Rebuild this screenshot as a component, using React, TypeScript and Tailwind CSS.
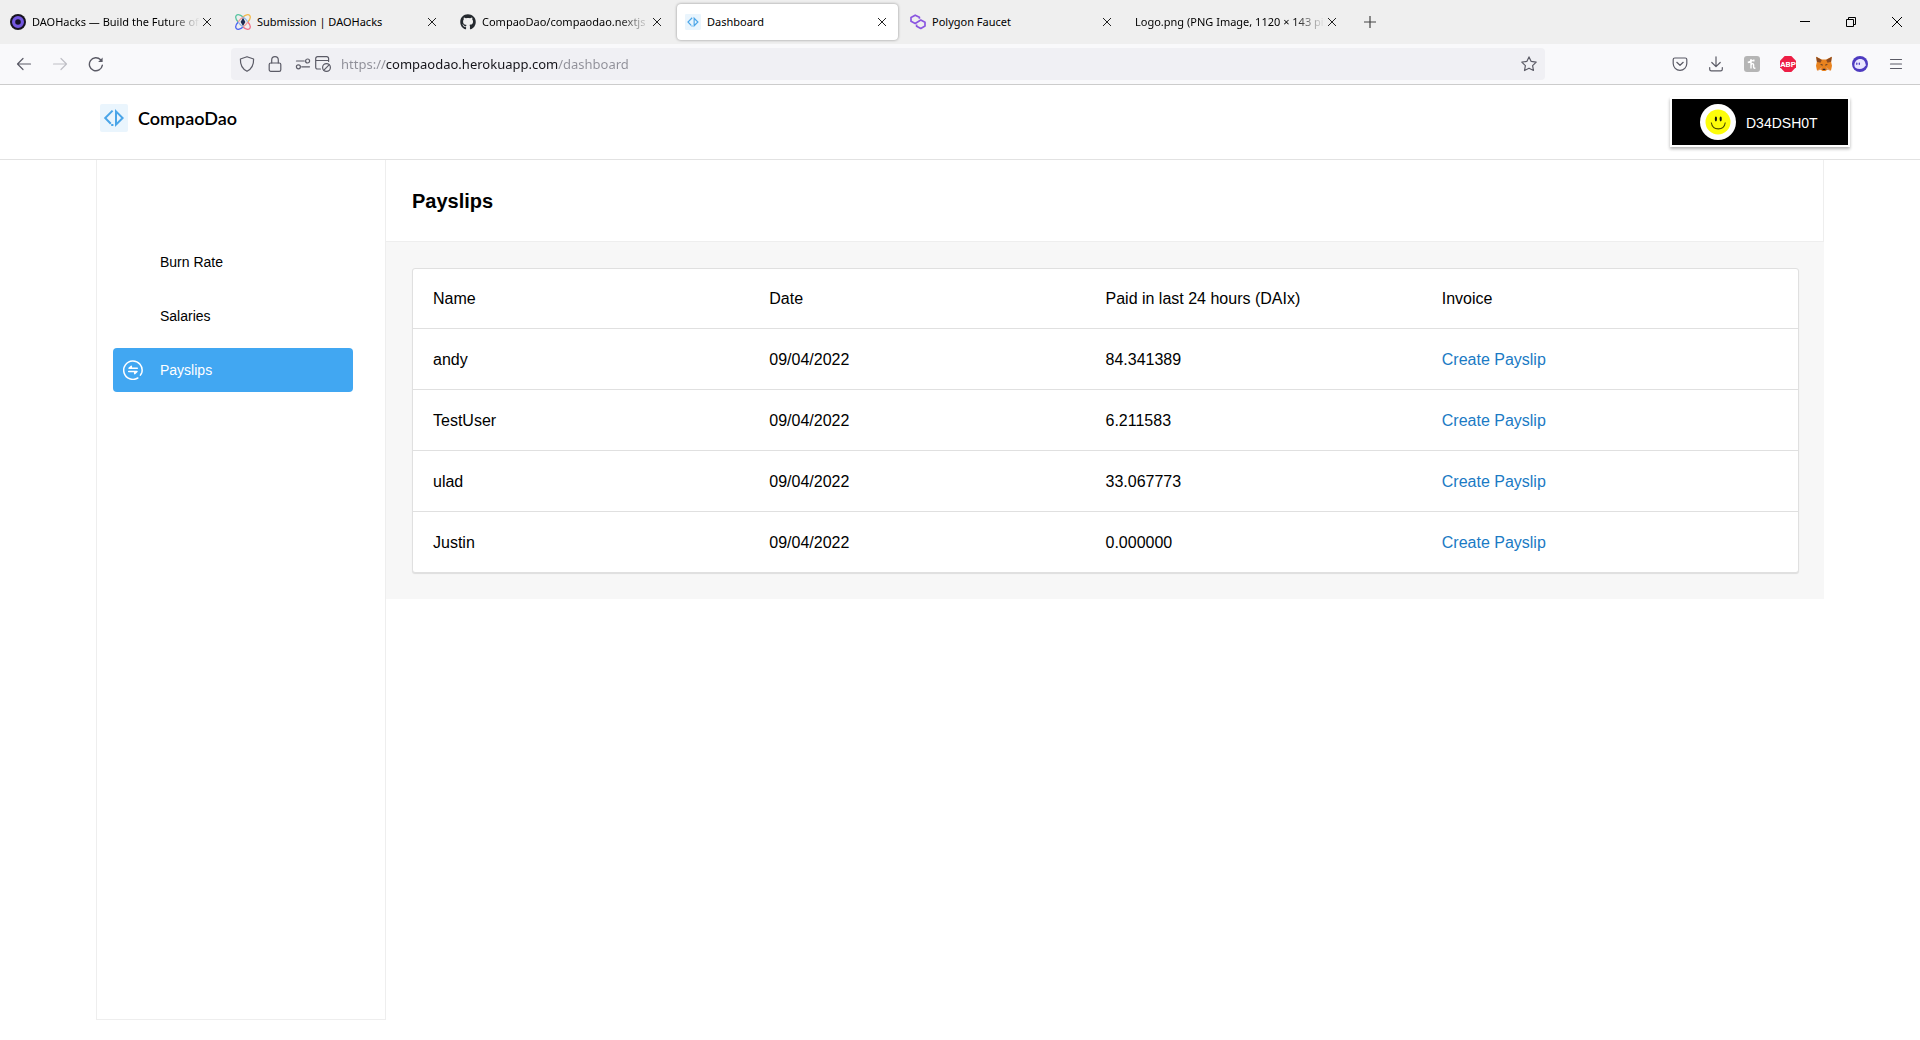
import { useState } from "react";
import type { ReactNode } from "react";
import { FaGithub } from "react-icons/fa";

type Tab = { id: number; title: string; icon?: ReactNode; faded?: boolean };

const PAYSLIPS = [
  { name: "andy", date: "09/04/2022", paid: 84.341389 },
  { name: "TestUser", date: "09/04/2022", paid: 6.211583 },
  { name: "ulad", date: "09/04/2022", paid: 33.067773 },
  { name: "Justin", date: "09/04/2022", paid: 0 },
];

const HEADERS = ["Name", "Date", "Paid in last 24 hours (DAIx)", "Invoice"];

function CompaoMark({ className }: { className?: string }) {
  return (
    <svg viewBox="0 0 28 28" className={className} aria-hidden="true">
      <rect width="28" height="28" rx="2" fill="#eaf5fd" />
      <g fill="none" stroke="#4aa5e8" strokeWidth="2">
        <path d="M12.6 6.6 5.2 14l5.6 5.8" />
        <path d="M16 7.4v13.2L22.6 14z" />
        <path d="M11.2 21h2.2" />
      </g>
    </svg>
  );
}

function DaoHacksIcon() {
  return (
    <svg viewBox="0 0 16 16" className="size-4" aria-hidden="true">
      <circle cx="8" cy="8" r="8" fill="#17131f" />
      <circle cx="8" cy="8" r="4.4" fill="none" stroke="#7357e0" strokeWidth="3.2" />
      <circle cx="8" cy="8" r="2" fill="#120d2b" />
    </svg>
  );
}

function SubmissionIcon() {
  return (
    <svg viewBox="0 0 16 16" className="size-4" fill="none" strokeWidth="1.3" aria-hidden="true">
      <path d="M8 3C10.5.8 13.4 0 14.6 1.400s.4 4.200-1.800 6.600" stroke="#f2b94b" />
      <path d="M8 3C5.500.8 2.600 0 1.400 1.400s-.4 4.200 1.800 6.600" stroke="#58c3a0" />
      <path d="M8 13c2.500 2.200 5.400 3 6.600 1.600s.4-4.200-1.800-6.600" stroke="#f0708a" />
      <path d="M8 13c-2.500 2.200-5.400 3-6.600 1.600S1 10.400 3.200 8" stroke="#4b63f0" />
      <path d="M8 3c2 1.400 3.700 3.200 4.800 5M8 13c-2-1.400-3.700-3.200-4.800-5" stroke="#8ab4e8" />
      <path d="M8 3C6 4.400 4.300 6.200 3.200 8M8 13c2-1.400 3.700-3.200 4.800-5" stroke="#f09a9a" />
      <path d="M8 3.800 10.400 8 8 12 5.600 8z" fill="#1d2b52" />
    </svg>
  );
}

function PolygonIcon() {
  return (
    <svg viewBox="0 0 16 16" className="size-4" fill="none" stroke="#8a55e0" strokeWidth="1.7" strokeLinejoin="round" aria-hidden="true">
      <path d="M9.400 4.800V3.300L5.200 1.200 1 3.400v3.800l4.200 2.200 5.600-3.300L15 8.300v3.800l-4.200 2.300-4.200-2.200v-1.700" />
    </svg>
  );
}

function CloseIcon({ className }: { className?: string }) {
  return (
    <svg viewBox="0 0 10 10" className={className} fill="none" stroke="currentColor" strokeWidth="1" aria-hidden="true">
      <path d="m1 1 8 8M9 1 1 9" />
    </svg>
  );
}

// shared frame of the 16px toolbar glyphs
function Glyph({ children }: { children: ReactNode }) {
  return (
    <svg
      viewBox="0 0 16 16"
      className="size-4 shrink-0"
      fill="none"
      stroke="currentColor"
      strokeWidth="1.2"
      strokeLinecap="round"
      strokeLinejoin="round"
      aria-hidden="true"
    >
      {children}
    </svg>
  );
}

function ToolButton({ label, children, disabled }: { label: string; children: ReactNode; disabled?: boolean }) {
  return (
    <button
      aria-label={label}
      disabled={disabled}
      className="flex h-8 w-9 items-center justify-center text-[#5b5b66] disabled:text-[#c0c0c6]"
    >
      {children}
    </button>
  );
}

const TABS: Tab[] = [
  { id: 1, title: "DAOHacks — Build the Future of", icon: <DaoHacksIcon />, faded: true },
  { id: 2, title: "Submission | DAOHacks", icon: <SubmissionIcon /> },
  { id: 3, title: "CompaoDao/compaodao.nextjs", icon: <FaGithub className="size-4 text-[#24292e]" />, faded: true },
  { id: 4, title: "Dashboard", icon: <CompaoMark className="size-4" /> },
  { id: 5, title: "Polygon Faucet", icon: <PolygonIcon /> },
  { id: 6, title: "Logo.png (PNG Image, 1120 × 143 pixels)", faded: true },
];

function TabStrip() {
  const [active, setActive] = useState(4);

  return (
    <div className="flex h-11 bg-[#efefef]">
      <div className="flex" role="tablist">
        {TABS.map((t) => (
          <div
            key={t.id}
            className={`mx-0.5 my-1 flex w-[221px] items-center rounded pr-[11px] pl-2 ${
              t.id === active ? "bg-white shadow-[0_0_3px_rgba(0,0,0,0.4)]" : ""
            }`}
          >
            <button
              role="tab"
              aria-selected={t.id === active}
              onClick={() => setActive(t.id)}
              className="flex min-w-0 flex-1 items-center gap-1.5 text-left"
            >
              {t.icon && <span className="shrink-0">{t.icon}</span>}
              <span
                className={`min-w-0 flex-1 pt-px whitespace-nowrap ${
                  t.faded ? "overflow-hidden [mask-image:linear-gradient(to_left,transparent,black_32px)]" : ""
                }`}
              >
                {t.title}
              </span>
            </button>
            <button aria-label={`Close ${t.title}`} className="ml-0.5 shrink-0 text-[#222]">
              <CloseIcon className="size-2.5" />
            </button>
          </div>
        ))}
      </div>
      <button aria-label="New tab" className="flex w-10 items-center justify-center text-[#444]">
        <svg viewBox="0 0 12 12" className="size-3" fill="none" stroke="currentColor" strokeWidth="1.2">
          <path d="M6 0v12M0 6h12" />
        </svg>
      </button>
      <div className="ml-auto flex text-black">
        <button aria-label="Minimize" className="flex w-[46px] items-center justify-center">
          <svg viewBox="0 0 10 10" className="size-2.5" stroke="currentColor">
            <path d="M0 4.500h10" />
          </svg>
        </button>
        <button aria-label="Restore" className="flex w-[46px] items-center justify-center">
          <svg viewBox="0 0 10 10" className="size-2.5" fill="none" stroke="currentColor">
            <path d="M.5 2.500h7v7h-7zM2.500 2.500v-2h7v7h-2" />
          </svg>
        </button>
        <button aria-label="Close window" className="flex w-[46px] items-center justify-center">
          <svg viewBox="0 0 10 10" className="size-2.5" fill="none" stroke="currentColor">
            <path d="m0 0 10 10M10 0 0 10" />
          </svg>
        </button>
      </div>
    </div>
  );
}

function Toolbar() {
  return (
    <div className="flex h-[41px] items-center border-b border-[#cccccc] bg-[#f9f9fb] px-1.5">
      <ToolButton label="Back">
        <Glyph>
          <path d="M14.500 8h-13M7 2.500 1.500 8 7 13.500" />
        </Glyph>
      </ToolButton>
      <ToolButton label="Forward" disabled>
        <Glyph>
          <path d="M1.500 8h13M9 2.500 14.500 8 9 13.500" />
        </Glyph>
      </ToolButton>
      <ToolButton label="Reload">
        <Glyph>
          <path d="M14.300 9.300A6.500 6.500 0 1 1 12.600 3.800" strokeWidth="1.4" />
          <path d="M14.600 1.600v4.500h-4.500z" fill="currentColor" stroke="none" />
        </Glyph>
      </ToolButton>

      <div className="mx-[117px] flex h-8 flex-1 items-center rounded bg-[#f0f0f4] px-2 text-[#5b5b66]">
        <Glyph>
          <path d="M8 .7 14.600 3c.2 5.200-1.600 9.800-6.600 12.300C3 12.800 1.200 8.200 1.400 3z" />
        </Glyph>
        <span className="ml-3">
          <Glyph>
            <rect x="2.200" y="7" width="11.600" height="8.300" rx="1.600" />
            <path d="M4.700 7V3.900a3.300 3.300 0 0 1 6.600 0V7" />
          </Glyph>
        </span>
        <span className="ml-3">
          <Glyph>
            <circle cx="12.600" cy="5" r="2" />
            <path d="M1.500 5h7.800" />
            <circle cx="3.400" cy="10.800" r="2" />
            <path d="M6.700 10.800h7.800" />
          </Glyph>
        </span>
        <span className="ml-1">
          <Glyph>
            <path d="M5.500 13H2.500A1.800 1.800 0 0 1 .7 11.200V2.500A1.800 1.800 0 0 1 2.500.7h9.300a1.800 1.800 0 0 1 1.800 1.800v3M.7 4.500h12.900" />
            <circle cx="11.500" cy="11.500" r="3.900" />
            <path d="m8.900 14.100 5.200-5.200" />
          </Glyph>
        </span>
        <input
          aria-label="Address"
          defaultValue="https://compaodao.herokuapp.com/dashboard"
          className="ml-2.5 min-w-0 flex-1 bg-[linear-gradient(to_right,#8f8f98_45px,#15141a_45px,#15141a_217px,#8f8f98_217px)] bg-clip-text pt-0.5 text-[13px] text-transparent outline-none"
        />
        <button aria-label="Bookmark this page">
          <Glyph>
            <path d="m8 .9 2.200 4.500 5 .7-3.600 3.500.9 4.900L8 12.200l-4.500 2.300.9-4.900L.8 6.100l5-.7z" />
          </Glyph>
        </button>
      </div>

      <ToolButton label="Save to Pocket">
        <Glyph>
          <path d="M2.800 2h10.400a1.600 1.600 0 0 1 1.600 1.600V7.500a6.800 6.800 0 0 1-13.600 0V3.600A1.600 1.600 0 0 1 2.800 2z" />
          <path d="M4.800 6.300 8 9.300l3.200-3" />
        </Glyph>
      </ToolButton>
      <ToolButton label="Downloads">
        <Glyph>
          <path d="M8 .8v9.700M3.800 6.500 8 10.700l4.200-4.200M1.700 11.500v1.700c0 1 .6 1.600 1.600 1.600h9.400c1 0 1.600-.6 1.600-1.600v-1.700" />
        </Glyph>
      </ToolButton>
      <ToolButton label="Honey">
        <svg viewBox="0 0 16 16" className="size-4">
          <rect width="16" height="16" rx="3" fill="#b5b5b5" />
          <path d="M3.800 6.500 9 4.300M7 3v9.500M7 9.200c.7-1.900 2.600-2.100 2.600-.2v2c0 1.200.8 1.500 1.800.8M9.800 3.600v2" fill="none" stroke="#fff" strokeWidth="1.400" />
        </svg>
      </ToolButton>
      <ToolButton label="Adblock Plus">
        <svg viewBox="0 0 16 16" className="size-4">
          <path d="M4.700 0h6.600L16 4.700v6.600L11.300 16H4.700L0 11.300V4.700z" fill="#ed1e45" />
          <text x="8" y="10.800" textAnchor="middle" fill="#fff" fontSize="8" fontWeight="700" fontFamily="Roboto, sans-serif">
            ABP
          </text>
        </svg>
      </ToolButton>
      <ToolButton label="MetaMask">
        <svg viewBox="0 0 16 16" className="size-4">
          <path d="m.2.8 5.600 2.800h4.400L15.800.8l-.7 5 .9 4-1 4.700-3.800-.8L9.500 15h-3l-1.700-1.300-3.800.8L0 9.800l.9-4z" fill="#e8821e" />
          <path d="M.2.800 5.800 4 4.500 6.800.9 5.800zM15.800.8 10.200 4l1.300 2.800 3.600-1z" fill="#8b4a20" />
          <path d="m1 14.500 3.800-.8L6 11zM15 14.500l-3.800-.8L10 11z" fill="#e0a070" />
          <path d="m4 8.300 2.600.3-.2 1.200zM12 8.300l-2.600.3.2 1.200zM6.800 12.700h2.400l.3 1.300h-3z" fill="#2c2530" />
        </svg>
      </ToolButton>
      <ToolButton label="Phantom">
        <svg viewBox="0 0 16 16" className="size-4">
          <circle cx="8" cy="8" r="8" fill="#4e3bc0" />
          <path d="M2.400 9.500C2.400 5.600 5 3 8.200 3c3.200 0 5.100 2.200 5.400 5.400.5.300.6 1.300-.3 1.400-.8 2-2.800 3.200-5.600 3.200-3.200 0-5.300-1.300-5.300-3.500z" fill="#e9e5ff" />
          <ellipse cx="4.800" cy="7.800" rx=".7" ry="1.200" fill="#4e3bc0" />
          <ellipse cx="7.300" cy="7.800" rx=".7" ry="1.200" fill="#4e3bc0" />
        </svg>
      </ToolButton>
      <ToolButton label="Open menu">
        <Glyph>
          <path d="M2.500 3.500h11M2.500 8h11M2.500 12.500h11" />
        </Glyph>
      </ToolButton>
    </div>
  );
}

function PayslipsIcon() {
  return (
    <svg viewBox="0 0 20 20" className="size-5" fill="none" stroke="currentColor" strokeWidth="1.5" strokeLinecap="round" strokeLinejoin="round" aria-hidden="true">
      <path d="M14.800 18A9.200 9.200 0 1 1 18.900 12.200c-.3 1.100-.8 2-1.500 2.900" />
      <path d="M14.300 8.300H6L8.300 6.300v2M5.700 11.500H14l-2.300 2.100v-2" />
    </svg>
  );
}

function SiteHeader() {
  return (
    <header className="flex h-[75px] items-start justify-between border-b border-[#e2e2e2] pt-3 pr-[70px] pl-[100px]">
      <a href="#home" className="mt-[7px] flex h-7 items-center gap-2.5">
        <CompaoMark className="size-7" />
        <span className="font-['Lato',sans-serif] text-[18px] font-semibold text-black">CompaoDao</span>
      </a>
      <button className="flex h-[50px] w-[180px] items-center gap-2.5 border-2 border-white bg-black pl-7 text-[14px] text-white shadow-[0_2px_3px_rgba(0,0,0,0.3)]">
        <svg viewBox="0 0 36 36" className="size-9" aria-hidden="true">
          <circle cx="18" cy="18" r="18" fill="#fff" />
          <circle cx="18" cy="18" r="12.500" fill="#fdfd0a" />
          <ellipse cx="15.900" cy="15" rx="1.100" ry="2.400" fill="#111" />
          <ellipse cx="20.700" cy="15" rx="1.100" ry="2.400" fill="#111" />
          <path d="M11.300 18.500c.6 4 3.400 6.400 7 6.400s6.400-2.400 7-6.400" fill="none" stroke="#4a4a00" strokeWidth="1.1" />
        </svg>
        <span className="pt-0.5">D34DSH0T</span>
      </button>
    </header>
  );
}

function Sidebar() {
  return (
    <aside className="min-h-[860px] w-[290px] shrink-0 border border-t-0 border-[#eeeeee] px-4 pt-20">
      <nav className="flex flex-col gap-2.5 text-[14px]">
        <a href="#burn-rate" className="flex h-11 w-60 items-center rounded pl-[47px] text-black">
          Burn Rate
        </a>
        <a href="#salaries" className="flex h-11 w-60 items-center rounded pl-[47px] text-black">
          Salaries
        </a>
        <a href="#payslips" aria-current="page" className="flex h-11 w-60 items-center gap-[17px] rounded bg-[#41a7f2] pl-2.5 text-white">
          <PayslipsIcon />
          Payslips
        </a>
      </nav>
    </aside>
  );
}

function PayslipsTable() {
  return (
    <table className="block rounded-[3px] border border-[#e0e0e0] bg-white text-[16px] leading-6 text-black shadow-[0_1px_1px_rgba(0,0,0,0.1)]">
      <thead className="block">
        <tr className="grid grid-cols-4 px-5">
          {HEADERS.map((h) => (
            <th key={h} scope="col" className="pt-[18px] pb-[17px] text-left font-normal">
              {h}
            </th>
          ))}
        </tr>
      </thead>
      <tbody className="block">
        {PAYSLIPS.map((p) => (
          <tr key={p.name} className="grid grid-cols-4 border-t border-[#e0e0e0] px-5">
            <td className="pt-[19px] pb-[17px]">{p.name}</td>
            <td className="pt-[19px] pb-[17px]">{p.date}</td>
            <td className="pt-[19px] pb-[17px]">{p.paid.toFixed(6)}</td>
            <td className="pt-[19px] pb-[17px]">
              <a href="#create-payslip" className="text-[#1a7ac4]">
                Create Payslip
              </a>
            </td>
          </tr>
        ))}
      </tbody>
    </table>
  );
}

export default function App() {
  return (
    <div className="min-h-screen bg-white font-['Liberation_Sans',Arial,sans-serif]">
      <div className="font-['Noto_Sans',sans-serif] text-[11px] text-black">
        <TabStrip />
        <Toolbar />
      </div>
      <SiteHeader />
      <div className="mx-auto flex w-[90%] items-start">
        <Sidebar />
        <main className="min-w-0 flex-1 bg-[#f7f7f7]">
          <div className="flex h-[82px] items-center border-r border-b border-[#eeeeee] bg-white px-[26px]">
            <h1 className="text-[20px] font-bold text-black">Payslips</h1>
          </div>
          <div className="py-[26px] pr-[25px] pl-[26px]">
            <PayslipsTable />
          </div>
        </main>
      </div>
    </div>
  );
}
